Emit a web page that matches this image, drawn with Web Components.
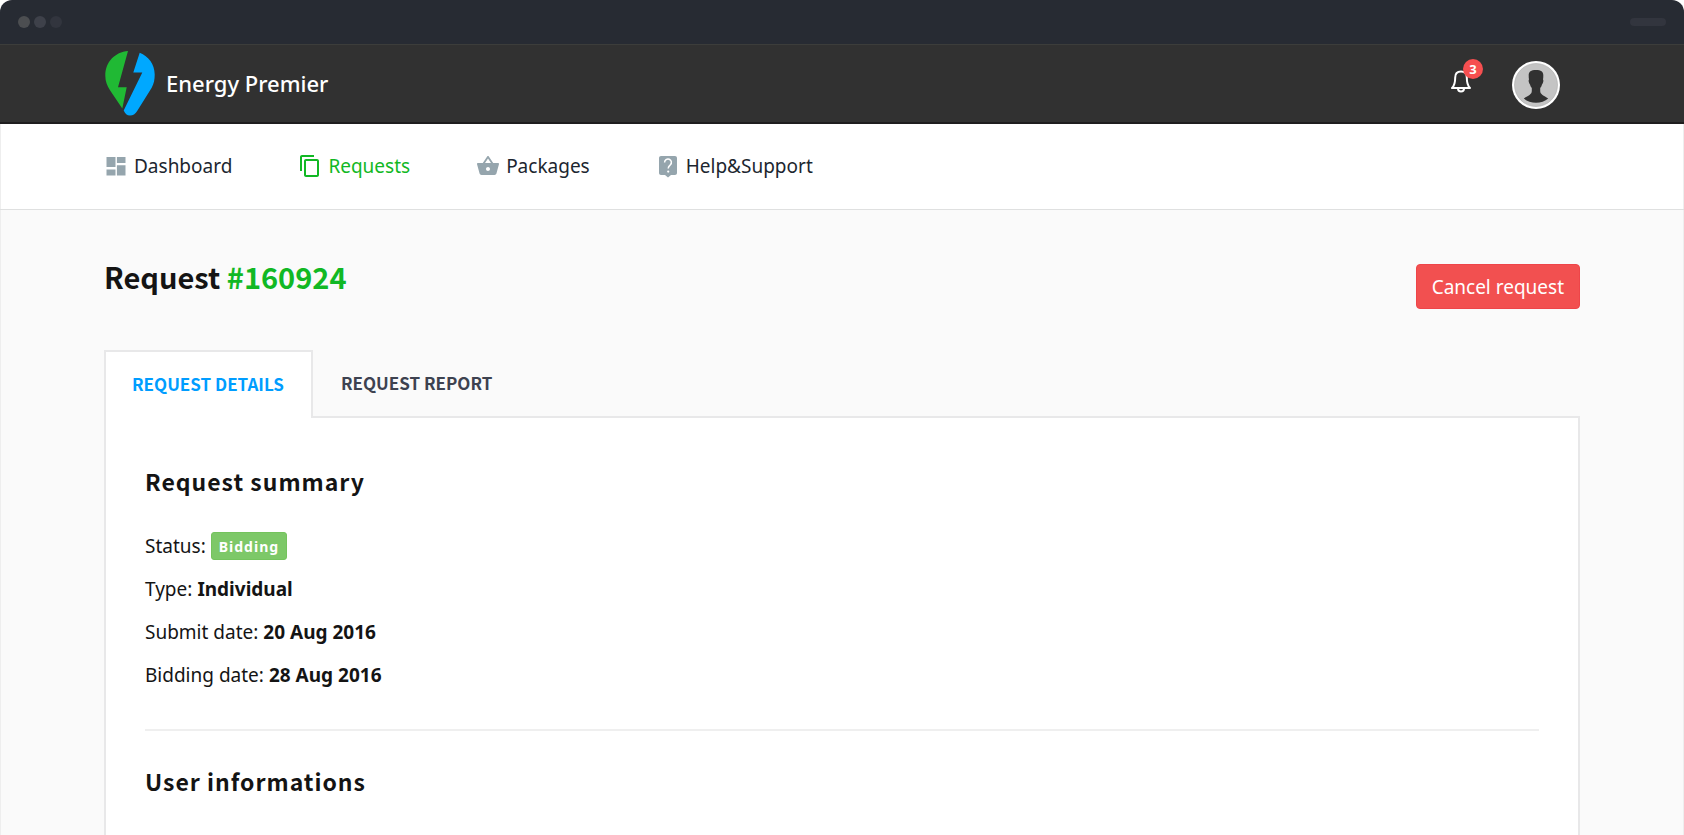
<!DOCTYPE html>
<html lang="en">
<head>
<meta charset="utf-8">
<title>Energy Premier – Request #160924</title>
<style>
  :root {
    --green: #11b824;
    --blue: #009dff;
    --red: #f25050;
    --ink: #141414;
    --line: #e8e8e9;
    --gutter: 104px;
    --display: "Noto Sans CJK SC", "Noto Sans", sans-serif;
  }
  body {
    margin: 0;
    background: #fff;
    color: var(--ink);
    font-family: "Noto Sans", sans-serif;
    font-size: 19px;
    line-height: 28px;
  }
</style>
</head>
<body>
<energy-page>
  <window-bar slot="top"></window-bar>
  <site-header slot="top" count="3">Energy Premier</site-header>
  <site-nav slot="top">
    <nav-item icon="dashboard">Dashboard</nav-item>
    <nav-item icon="copy" current>Requests</nav-item>
    <nav-item icon="basket">Packages</nav-item>
    <nav-item icon="help">Help&amp;Support</nav-item>
  </site-nav>
  <request-heading number="#160924">Request</request-heading>
  <tab-panel>
    <tab-button slot="tab" selected>REQUEST DETAILS</tab-button>
    <tab-button slot="tab">REQUEST REPORT</tab-button>
    <detail-section heading="Request summary">
      <detail-row label="Status:"><status-pill>Bidding</status-pill></detail-row>
      <detail-row label="Type:">Individual</detail-row>
      <detail-row label="Submit date:">20 Aug 2016</detail-row>
      <detail-row label="Bidding date:">28 Aug 2016</detail-row>
    </detail-section>
    <detail-section heading="User informations"></detail-section>
  </tab-panel>
</energy-page>

<script>
const define = (name, render) => customElements.define(name, class extends HTMLElement {
  connectedCallback() {
    if (this.shadowRoot) return;
    this.attachShadow({ mode: 'open' }).innerHTML = render(this);
  }
});

const icons = {
  dashboard: '<path d="M2.5 3h9v10h-9zM2.5 15.5h9v6h-9zM12.9 3h8.6v6h-8.6zM12.9 11.2h8.6v10.3h-8.6z"/>',
  copy: '<path d="M16 1H4c-1.1 0-2 .9-2 2v14h2V3h12V1zm3 4H8c-1.1 0-2 .9-2 2v14c0 1.1.9 2 2 2h11c1.1 0 2-.9 2-2V7c0-1.1-.9-2-2-2zm0 16H8V7h11v14z"/>',
  basket: '<path d="M17.21 9l-4.38-6.56c-.19-.28-.51-.42-.83-.42-.32 0-.64.14-.83.43L6.79 9H2c-.55 0-1 .45-1 1 0 .09.01.18.04.27l2.54 9.27c.23.84 1 1.46 1.92 1.46h13c.92 0 1.69-.62 1.93-1.46l2.54-9.27L23 10c0-.55-.45-1-1-1h-4.79zM9 9l3-4.4L15 9H9zm3 8c-1.1 0-2-.9-2-2s.9-2 2-2 2 .9 2 2-.9 2-2 2z"/>',
  help: '<path d="M19 2H5c-1.1 0-2 .9-2 2v15c0 1.1.9 2 2 2h4l3 2.5 3-2.5h4c1.1 0 2-.9 2-2V4c0-1.1-.9-2-2-2z"/><path d="M8.6 8.5a3.4 3.4 0 1 1 5.8 2.3c-1.3 1.2-2.2 1.8-2.2 3.7" fill="none" stroke="#fff" stroke-width="1.5"/><circle cx="12.2" cy="17.6" r="1.1" fill="#fff"/>'
};

define('energy-page', () => `
  <style>
    :host { display: flex; flex-direction: column; min-height: 100vh; }
    main {
      flex: 1; display: flex; flex-direction: column; box-sizing: border-box;
      padding: 44px var(--gutter) 0; background: #fafafa;
      box-shadow: inset 1px 0 #eee, inset -1px 0 #eee;
    }
  </style>
  <slot name="top"></slot>
  <main><slot></slot></main>`);

define('window-bar', () => `
  <style>
    :host {
      display: flex; align-items: center; gap: 4px; height: 44px; box-sizing: border-box;
      padding: 0 18px; background: #272b33; border-radius: 12px 12px 0 0;
    }
    i { width: 12px; height: 12px; border-radius: 50%; background: #4c4e51; }
    i:nth-of-type(2) { background: #3e414a; }
    i:nth-of-type(3) { background: #32353e; }
    b { width: 36px; height: 8px; border-radius: 4px; margin-left: auto; background: #32353e; }
  </style>
  <i></i><i></i><i></i><b></b>`);

define('site-header', host => `
  <style>
    :host { display: block; }
    header {
      display: flex; align-items: center; justify-content: space-between;
      height: 80px; box-sizing: border-box; padding: 0 124px 2px var(--gutter);
      background: #313131; border-top: 1px solid #3c3d3b; border-bottom: 2px solid #1f1d1e;
    }
    .brand {
      display: flex; align-items: center; gap: 10px; color: #fff; text-decoration: none;
      font-size: 22px; font-weight: 500; line-height: 32px;
    }
    .brand svg { display: block; width: 52px; height: 66px; }
    .tools { display: flex; align-items: center; gap: 41px; }
    button { padding: 0; border: 0; background: none; position: relative; font: inherit; }
    svg { display: block; }
    .badge {
      position: absolute; left: 12px; top: -11px; width: 20px; height: 20px; border-radius: 50%;
      background: #f64f50; color: #fff; font-size: 13px; font-weight: 700; line-height: 20px; text-align: center;
    }
    .bell { margin-bottom: 3px; }
    .avatar { margin-top: 4px; }
  </style>
  <header>
    <a class="brand" href="#">
      <svg viewBox="-1 0 52 66" aria-hidden="true">
        <path fill="#20b934" d="M23 1C10 2 .3 12 .3 25.5c0 6 1.7 10 4.7 14.7L17.3 58.5l4.4-21.3H13z"/>
        <path fill="#00a8ff" d="M34.7 2.8C43.5 6.500 49.7 14 49.7 24.500c0 5-.7 9-3 13.300L32 61.200C30.300 64 28 65.500 25 65.500c-3 0-5-2-6.300-5L37.300 22.500h-9z"/>
      </svg>
      <span><slot></slot></span>
    </a>
    <div class="tools">
      <button class="bell" aria-label="Notifications">
        <svg width="20" height="23" viewBox="0 0 20 23" fill="none" stroke="#fff" stroke-width="2" stroke-linejoin="round">
          <path d="M10 1.500C6 1.500 4.200 4 4.200 7.500c0 5-.5 8-3.200 10.500h18c-2.700-2.500-3.200-5.500-3.200-10.500 0-3.500-1.800-6-5.800-6z"/>
          <path d="M7 18.500c0 4 6 4 6 0"/>
        </svg>
        <span class="badge">${host.getAttribute('count')}</span>
      </button>
      <button class="avatar" aria-label="Account">
        <svg width="48" height="48" viewBox="0 0 48 48">
          <circle cx="24" cy="24" r="24" fill="#fff"/>
          <circle cx="24" cy="24" r="21.500" fill="#c4c4c4" stroke="#aaa" stroke-width=".6"/>
          <path fill="#313131" d="M24 9c-5 0-7.300 1.500-7.300 5.500 0 1.300 0 2.500.3 4-.9 1 0 3.800 1 5 .3 1.500.9 2.600 1.800 3.500v3c0 3.500-3.500 4.500-8 7.500 3 2.700 7.700 4.300 12.200 4.300s9.200-1.600 12.200-4.300c-4.500-3-8-4-8-7.500v-3c.9-.9 1.500-2 1.800-3.500 1-1.200 1.900-4 1-5 .3-1.500.3-2.700.3-4 0-4-2.300-5.500-7.300-5.500z"/>
        </svg>
      </button>
    </div>
  </header>`);

define('site-nav', () => `
  <style>
    :host { display: block; }
    nav {
      display: flex; align-items: center; gap: 66px; height: 86px; box-sizing: border-box;
      padding: 0 var(--gutter) 2px; background: #fff; border-bottom: 1px solid #dfe0e0;
      box-shadow: inset 1px 0 #eee, inset -1px 0 #eee;
    }
  </style>
  <nav><slot></slot></nav>`);

define('nav-item', host => `
  <style>
    :host { display: block; }
    a { display: flex; align-items: center; gap: 6px; color: #1c262f; text-decoration: none; }
    svg { display: block; width: 24px; height: 24px; fill: #95a5ad; }
    a[aria-current] { color: var(--green); }
    a[aria-current] svg { fill: var(--green); }
  </style>
  <a href="#" ${host.hasAttribute('current') ? 'aria-current="page"' : ''}>
    <svg viewBox="0 0 24 24" aria-hidden="true">${icons[host.getAttribute('icon')]}</svg>
    <span><slot></slot></span>
  </a>`);

define('request-heading', host => `
  <style>
    :host { display: flex; justify-content: space-between; align-items: flex-end; }
    h1 { margin: 0 0 11px; font: 700 29px/44px var(--display); }
    h1 span { color: var(--green); }
    button {
      height: 45px; padding: 0 15px; border: 1px solid #ee4549; border-radius: 4px;
      background: var(--red); color: #fff; font: inherit;
    }
  </style>
  <h1><slot></slot> <span>${host.getAttribute('number')}</span></h1>
  <button>Cancel request</button>`);

define('tab-panel', () => `
  <style>
    :host { flex: 1; display: flex; flex-direction: column; margin-top: 41px; }
    .tabs { display: flex; height: 68px; margin-bottom: -2px; z-index: 1; }
    .panel {
      flex: 1; padding: 45px 39px 0; background: #fff;
      border: 2px solid var(--line); border-bottom: 0;
    }
  </style>
  <div class="tabs" role="tablist"><slot name="tab"></slot></div>
  <div class="panel" role="tabpanel"><slot></slot></div>`);

define('tab-button', host => `
  <style>
    :host { display: flex; }
    button {
      padding: 0 28px 2px; border: 0; background: none; color: #3d4250;
      font: 700 17px/24px var(--display);
    }
    button[aria-selected=true] {
      padding: 0 27px 2px 26px; color: var(--blue); background: #fff;
      border: 2px solid var(--line); border-bottom: 0;
    }
  </style>
  <button role="tab" aria-selected="${host.hasAttribute('selected')}"><slot></slot></button>`);

define('detail-section', host => `
  <style>
    :host { display: block; }
    :host(:not(:first-of-type)) { border-top: 2px solid #efefef; margin-top: 40px; padding-top: 32px; }
    h2 { margin: 0; font: 700 23px/36px var(--display); letter-spacing: 1px; }
    .rows { display: flex; flex-direction: column; gap: 15px; margin-top: 33px; }
  </style>
  <h2>${host.getAttribute('heading')}</h2>
  <div class="rows"><slot></slot></div>`);

define('detail-row', host => `
  <style>
    :host { display: flex; gap: 5px; }
    b { display: flex; font-weight: 700; }
  </style>
  <span>${host.getAttribute('label')}</span><b><slot></slot></b>`);

define('status-pill', () => `
  <style>
    :host {
      display: block; height: 28px; box-sizing: border-box; padding: 0 7px;
      border: 1px solid #74c35d; border-radius: 3px; background: #7dc868;
      color: #fff; font-size: 14px; font-weight: 700; line-height: 28px; letter-spacing: 1px;
    }
  </style>
  <slot></slot>`);
</script>
</body>
</html>
